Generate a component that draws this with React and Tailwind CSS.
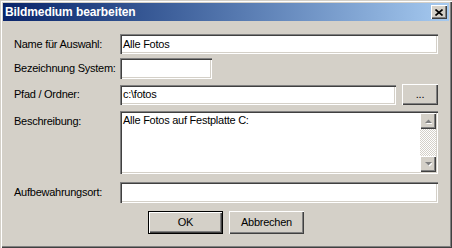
import React from "react";

const sunken =
  "bg-white shadow-[inset_1px_1px_#808080,inset_2px_2px_#404040,inset_-1px_-1px_#ffffff,inset_-2px_-2px_#d4d0c8]";
const raised =
  "bg-[#d4d0c8] shadow-[inset_1px_1px_#ffffff,inset_-1px_-1px_#404040,inset_-2px_-2px_#808080]";

const Field = ({ className = "", children }) => (
  <div className={`${sunken} flex items-center pl-[3px] text-black ${className}`}>
    {children}
  </div>
);

const Label = ({ children }) => (
  <div className="w-[106px] shrink-0 h-[20px] flex items-center text-black">{children}</div>
);

const Arrow = ({ up }) => (
  <svg width="7" height="5" viewBox="0 0 7 5" className="block">
    {up ? (
      <>
        <path d="M1 5h7L4.5 1.5z" fill="#ffffff" />
        <path d="M0 4h7L3.5 0.5z" fill="#808080" />
      </>
    ) : (
      <>
        <path d="M1 1h7L4.5 4.5z" fill="#ffffff" />
        <path d="M0 0h7L3.5 3.5z" fill="#808080" />
      </>
    )}
  </svg>
);

const App = () => {
  return (
    <div
      className="w-[452px] h-[248px] bg-[#d4d0c8] p-[3px] flex flex-col text-[11px] tracking-[-0.25px] shadow-[inset_1px_1px_#d4d0c8,inset_2px_2px_#ffffff,inset_-1px_-1px_#404040,inset_-2px_-2px_#808080]"
      style={{ fontFamily: '"Liberation Sans", Arial, sans-serif' }}
    >
      {/* title bar */}
      <div className="h-[18px] flex items-center justify-between bg-gradient-to-r from-[#0a246a] to-[#a6caf0] pl-[2px] pr-[2px]">
        <span className="text-white font-bold text-[12px] tracking-[-0.1px] leading-none">
          Bildmedium bearbeiten
        </span>
        <div className={`${raised} w-[16px] h-[14px] flex items-center justify-center`}>
          <svg width="8" height="7" viewBox="0 0 8 7">
            <path d="M0.5 0.5L7.5 6.5M7.5 0.5L0.5 6.5" stroke="#000" strokeWidth="1.6" />
          </svg>
        </div>
      </div>

      <div className="flex flex-col pl-[11px] pr-[11px]">
        <div className="flex items-center mt-[13px]">
          <Label>Name für Auswahl:</Label>
          <Field className="flex-1 h-[20px]">Alle Fotos</Field>
        </div>

        <div className="flex items-center mt-[4px]">
          <Label>Bezeichnung System:</Label>
          <Field className="w-[92px] h-[21px]" />
        </div>

        <div className="flex items-center mt-[5px]">
          <Label>Pfad / Ordner:</Label>
          <Field className="flex-1 h-[20px]">c:\fotos</Field>
          <div className={`${raised} ml-[6px] w-[36px] h-[21px] flex items-center justify-center text-black`}>
            ...
          </div>
        </div>

        <div className="flex items-start mt-[6px]">
          <Label>Beschreibung:</Label>
          <div className={`${sunken} flex-1 h-[63px] flex p-[2px]`}>
            <div className="flex-1 pl-[1px] pt-[1px] leading-[13px] text-black">
              Alle Fotos auf Festplatte C:
            </div>
            <div className="w-[16px] flex flex-col bg-[repeating-conic-gradient(#d4d0c8_0_25%,#ffffff_0_50%)] bg-[length:2px_2px]">
              <div className={`${raised} h-[16px] flex items-center justify-center`}>
                <Arrow up />
              </div>
              <div className="flex-1" />
              <div className={`${raised} h-[16px] flex items-center justify-center`}>
                <Arrow />
              </div>
            </div>
          </div>
        </div>

        <div className="flex items-center mt-[8px]">
          <Label>Aufbewahrungsort:</Label>
          <Field className="flex-1 h-[21px]" />
        </div>

        <div className="flex justify-center gap-[6px] mt-[8px]">
          <div className="w-[75px] h-[23px] border border-black">
            <div className={`${raised} w-full h-full flex items-center justify-center text-black`}>
              OK
            </div>
          </div>
          <div className={`${raised} w-[75px] h-[23px] flex items-center justify-center text-black`}>
            Abbrechen
          </div>
        </div>
      </div>
    </div>
  );
};

export default App;
